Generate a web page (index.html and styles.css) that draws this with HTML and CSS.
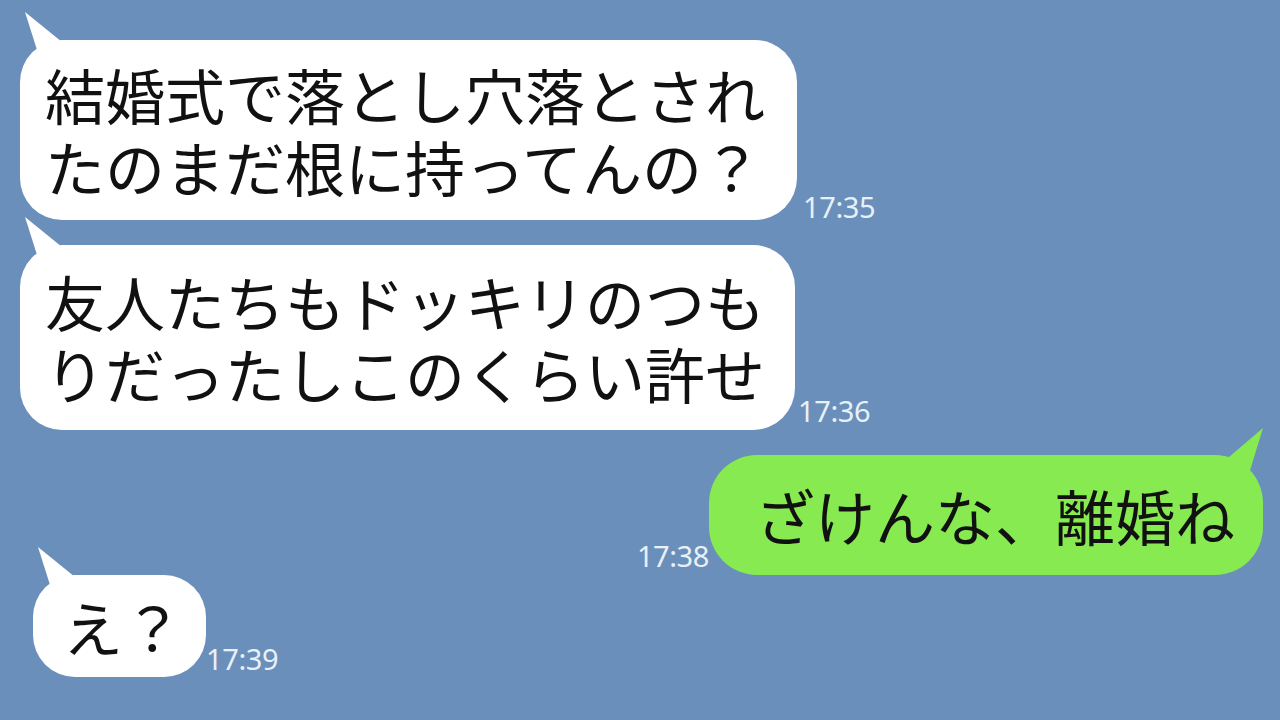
FILE: index.html
```html
<!DOCTYPE html>
<html lang="ja">

<head>
    <meta charset="UTF-8">
    <meta name="viewport" content="width=device-width, initial-scale=1.0">
    <title>Chat</title>
    <link rel="stylesheet" href="styles.css">
</head>

<body>
    <div class="chat">
        <div class="row row-first">
            <div class="bubble bubble-in bubble-long">結婚式で落とし穴落とされ<br>たのまだ根に持ってんの？</div>
            <span class="time">17:35</span>
        </div>
        <div class="row row-second">
            <div class="bubble bubble-in bubble-long bubble-second">友人たちもドッキリのつも<br>りだったしこのくらい許せ</div>
            <span class="time">17:36</span>
        </div>
        <div class="row row-out">
            <span class="time">17:38</span>
            <div class="bubble bubble-out">ざけんな、離婚ね</div>
        </div>
        <div class="row row-last">
            <div class="bubble bubble-in bubble-short">え？</div>
            <span class="time">17:39</span>
        </div>
    </div>
</body>

</html>
```

FILE: styles.css
```css
* {
    margin: 0;
    padding: 0;
    box-sizing: border-box;
}

body {
    width: 1280px;
    height: 720px;
    overflow: hidden;
    background-color: #6b8fbb;
    font-family: "Noto Sans CJK JP", "Noto Sans", sans-serif;
}

.chat {
    display: flex;
    flex-direction: column;
    padding: 40px 17px 0 20px;
}

.row {
    display: flex;
    align-items: flex-end;
    margin-top: 25px;
}

.row-first {
    margin-top: 0;
}

.row-out {
    justify-content: flex-end;
}

.row-last {
    margin-top: 0;
    padding-left: 13px;
}

.bubble {
    position: relative;
    color: #111;
    font-size: 60px;
    line-height: 72px;
    white-space: nowrap;
}

.bubble-in {
    background: #ffffff;
    border-radius: 42px;
}

.bubble-long {
    padding: 18px 32px 18px 25px;
}

.bubble-second {
    padding-top: 20px;
    padding-bottom: 21px;
    padding-right: 30px;
}

.bubble-short {
    padding: 15px 23px 15px 30px;
}

.bubble-out {
    background: #86ea50;
    border-radius: 48px;
    padding: 24px 28px 24px 46px;
}

.bubble-in::before,
.bubble-out::before {
    content: "";
    position: absolute;
    top: -28px;
    width: 50px;
    height: 50px;
}

.bubble-in::before {
    left: 0;
    background: #ffffff;
    clip-path: polygon(5px 0, 42px 30px, 30px 50px, 18px 41px);
}

.bubble-out::before {
    right: 0;
    top: -27px;
    background: #86ea50;
    clip-path: polygon(50px 0, 35px 49px, 24px 50px, 16px 29px);
}

/* timestamps */
.time {
    color: #e8f0f8;
    font-family: "Noto Sans", sans-serif;
    font-size: 29px;
    line-height: 29px;
    letter-spacing: -0.4px;
    margin: 0 0 -1px 6px;
}

.row-second .time {
    margin: 0 0 5px 3px;
}

.row-out .time {
    margin: 0 0 5px 0;
}

.row-last .time {
    margin: 0 0 4px 0;
}
```
